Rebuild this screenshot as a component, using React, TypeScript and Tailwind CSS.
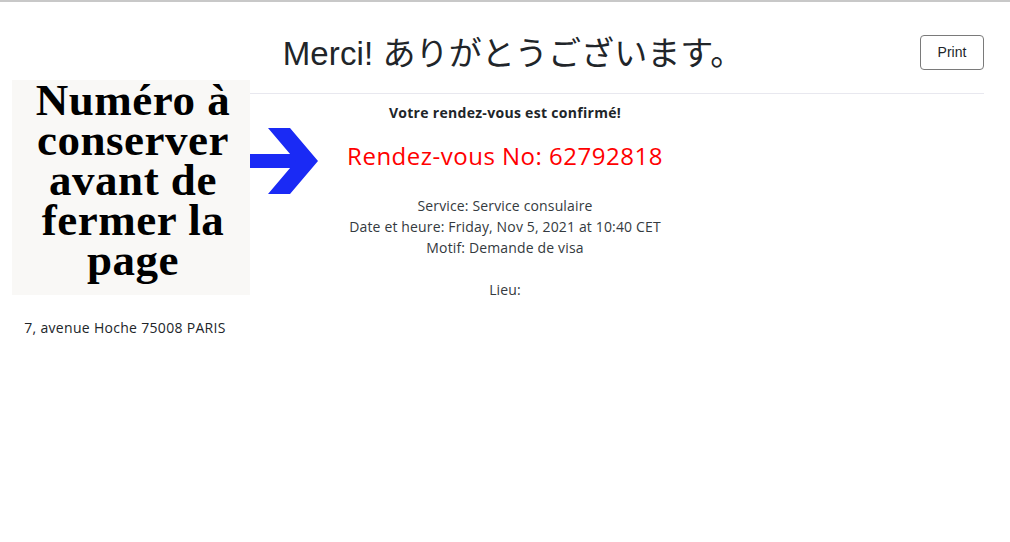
import React from 'react';

const body = { fontFamily: '"Open Sans", "Noto Sans", sans-serif' };

function Arrow() {
  return (
    <svg width="70" height="68" viewBox="250 127 70 68" className="block">
      <rect x="250" y="153" width="46" height="14" fill="#1a2af5" />
      <polygon points="268,127 290,127 318,160 290,193 268,193 296,160" fill="#1a2af5" />
    </svg>
  );
}

export default function App() {
  return (
    <div className="w-[1010px] h-[542px] bg-white border-t-2 border-[#c8c8c8] text-[#212529]" style={body}>
      <div className="relative flex items-center justify-center h-[91px]">
        <h1
          className="mt-[11px] ml-[16px] text-[33px] font-normal leading-none text-[#212529] tracking-[0.1px]"
          style={{ fontFamily: '"Liberation Sans", "Noto Sans CJK JP", sans-serif' }}
        >
          Merci! ありがとうございます。
        </h1>
        <button
          className="absolute right-[26px] top-[33px] w-[64px] h-[35px] rounded border border-[#7a7a7a] text-[14px] text-[#212529] bg-white"
          style={{ fontFamily: '"Liberation Sans", sans-serif' }}
        >
          Print
        </button>
      </div>

      <div className="grid grid-cols-[250px_1fr_250px]">
        <div className="flex flex-col items-end -mt-[13px]">
          <div
            className="w-[238px] h-[215px] bg-[#f9f8f6] flex items-start justify-center text-center text-black font-bold text-[45px] leading-[40px] tracking-[0.5px] pl-[4px]"
            style={{ fontFamily: '"Liberation Serif", serif' }}
          >
            <span>
              Numéro à<br />conserver<br />avant de<br />fermer la<br />page
            </span>
          </div>
          <div className="w-[250px] mt-[22px] text-center text-[14px] tracking-[0.3px] text-[#212529]">
            7, avenue Hoche 75008 PARIS
          </div>
        </div>

        <div className="col-span-2 flex flex-col">
          <div className="mr-[26px] border-t border-[#e8e8ef]" />
          <div className="grid grid-cols-[1fr_250px]">
            <div className="relative flex flex-col items-center text-center">
              <div className="absolute left-0 top-[34px]">
                <Arrow />
              </div>
              <div className="mt-[9px] text-[14px] font-bold leading-[20px] tracking-[0.3px] text-[#212529]">
                Votre rendez-vous est confirmé!
              </div>
              <div className="mt-[17px] text-[24px] leading-[32px] tracking-[0.5px] text-[#ff0000]">
                Rendez-vous No: 62792818
              </div>
              <div className="mt-[23px] text-[14px] leading-[21px] tracking-[0.15px] text-[#343a40]">
                <div>Service: Service consulaire</div>
                <div>Date et heure: Friday, Nov 5, 2021 at 10:40 CET</div>
                <div>Motif: Demande de visa</div>
                <div>&nbsp;</div>
                <div>Lieu:</div>
              </div>
            </div>
            <div />
          </div>
        </div>
      </div>
    </div>
  );
}
